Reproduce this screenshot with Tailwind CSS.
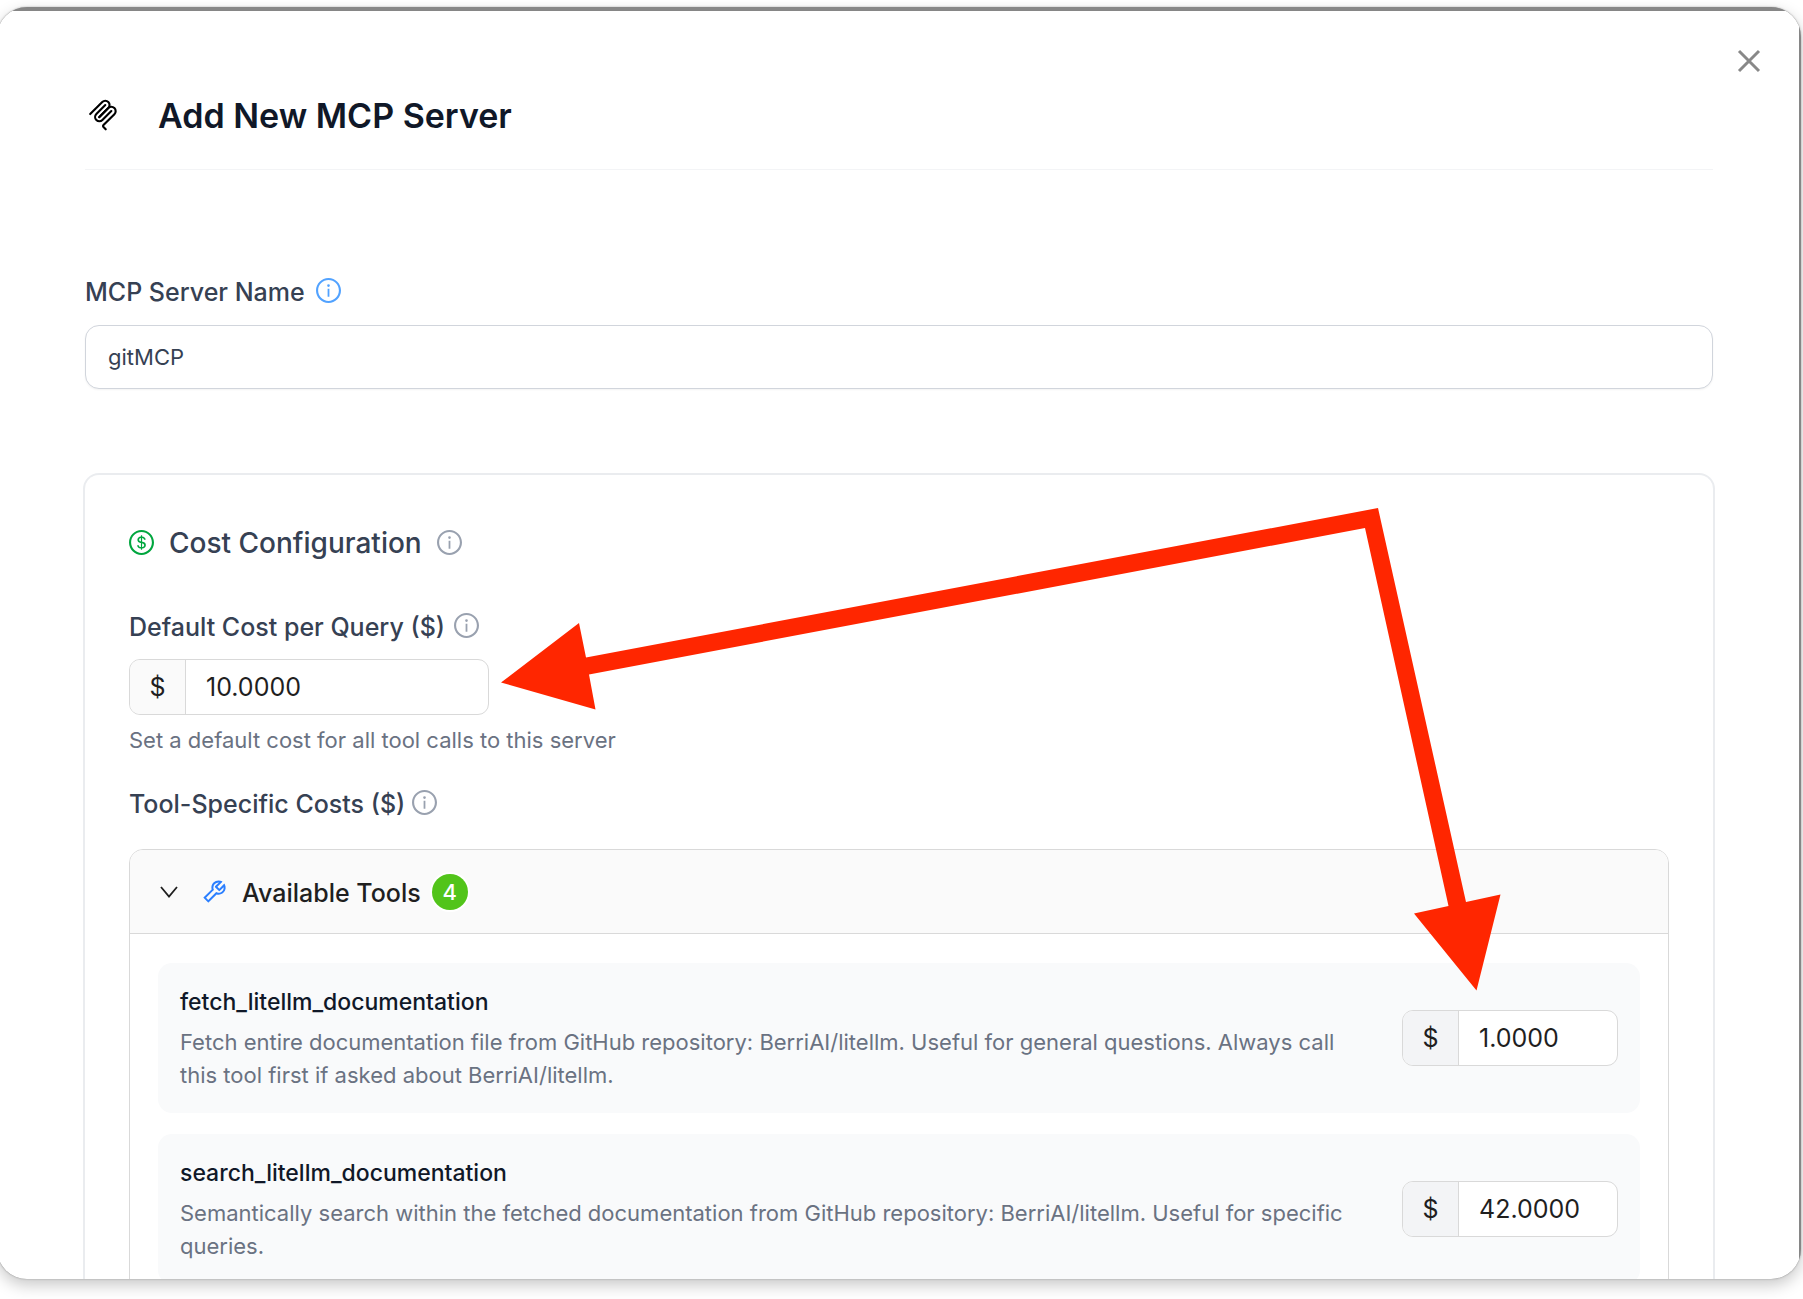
<!DOCTYPE html>
<html lang="en">
<head>
<meta charset="utf-8">
<title>Add New MCP Server</title>
<script src="https://cdn.jsdelivr.net/npm/@tailwindcss/browser@4"></script>
</head>
<body class="h-screen overflow-hidden bg-white font-['Inter',sans-serif] text-[#1f1f1f]">
<svg class="hidden" aria-hidden="true">
  <symbol id="info" viewBox="64 64 896 896">
    <path d="M512 64C264.6 64 64 264.6 64 512s200.6 448 448 448 448-200.6 448-448S759.4 64 512 64zm0 820c-205.4 0-372-166.6-372-372s166.6-372 372-372 372 166.6 372 372-166.6 372-372 372z"/>
    <path d="M464 336a48 48 0 1096 0 48 48 0 10-96 0zm72 112h-48c-4.4 0-8 3.6-8 8v272c0 4.4 3.6 8 8 8h48c4.4 0 8-3.6 8-8V456c0-4.4-3.6-8-8-8z"/>
  </symbol>
</svg>

<div class="relative h-full pt-[7px] pb-5">
  <div class="-ml-[3px] mr-0.5 h-full overflow-hidden rounded-[30px] bg-[#868686] px-0.5 pt-1 shadow-[0_0_2px_rgba(0,0,0,0.3),0_6px_16px_rgba(0,0,0,0.22)]">
    <main role="dialog" aria-labelledby="dialog-title" class="relative h-full overflow-hidden bg-white px-[86px] pt-[50px]">
      <button type="button" aria-label="Close" class="absolute top-[34px] right-[34px] flex size-8 items-center justify-center text-[#888888]">
        <svg class="size-6" viewBox="0 0 24 24" fill="none" stroke="currentColor" stroke-width="3"><path d="M2 2l20 20M22 2l-20 20"/></svg>
      </button>

      <header class="flex h-[109px] items-center gap-[39px] border-b border-gray-100">
        <svg class="ml-0.5 size-8" viewBox="0 0 180 180" fill="none" stroke="#000" stroke-width="12" stroke-linecap="round">
          <path d="M18 84.8528L85.8822 16.9706C95.2548 7.59798 110.451 7.59798 119.823 16.9706C129.196 26.3431 129.196 41.5391 119.823 50.9117L68.5581 102.177"/>
          <path d="M69.2652 101.47L119.823 50.9117C129.196 41.5391 144.392 41.5391 153.765 50.9117L154.118 51.2652C163.491 60.6378 163.491 75.8338 154.118 85.2063L92.7248 146.6C89.6006 149.724 89.6006 154.789 92.7248 157.913L105.331 170.52"/>
          <path d="M102.853 33.9411L52.6482 84.1457C43.2756 93.5183 43.2756 108.714 52.6482 118.087C62.0208 127.459 77.2167 127.459 86.5893 118.087L136.794 67.8822"/>
        </svg>
        <h1 id="dialog-title" class="text-[34px] font-semibold text-gray-900">Add New MCP Server</h1>
      </header>

      <div class="mt-[105px] flex h-[31px] items-center gap-[11px]">
        <label for="server-name" class="pt-0.5 text-[25px] leading-8 font-medium text-gray-700">MCP Server Name</label>
        <svg class="size-[25px] text-blue-400" fill="currentColor"><use href="#info"/></svg>
      </div>
      <input id="server-name" type="text" value="gitMCP" class="mt-[19px] block h-16 w-full rounded-[14px] border border-gray-300 bg-white px-[22px] text-[22px] text-gray-700 shadow-xs">

      <section class="mt-[86px] rounded-[14px] px-11 pt-12 pb-11 shadow-xs ring-2 ring-gray-200/80">
        <div class="flex h-[39px] items-center gap-[15px]">
          <svg class="size-[25px] text-green-600" viewBox="64 64 896 896" fill="currentColor"><path d="M512 64C264.6 64 64 264.6 64 512s200.6 448 448 448 448-200.6 448-448S759.4 64 512 64zm0 820c-205.4 0-372-166.6-372-372s166.6-372 372-372 372 166.6 372 372-166.6 372-372 372zm47.7-395.2l-25.4-5.9V348.6c38 5.2 61.5 29 65.5 58.2.5 4 3.9 6.9 7.9 6.9h44.9c4.7 0 8.4-4.1 8-8.8-6.1-62.3-57.4-102.3-125.9-109.2V263c0-4.4-3.6-8-8-8h-28.1c-4.4 0-8 3.6-8 8v33c-70.8 6.9-126.2 46-126.2 119 0 67.6 49.8 100.2 102.1 112.7l24.7 6.3v142.7c-44.2-5.9-69-29.5-74.1-61.3-.6-3.8-4-6.6-7.9-6.6H363c-4.7 0-8.4 4-8 8.7 4.5 55 46.2 105.6 135.2 112.1V761c0 4.4 3.6 8 8 8h28.4c4.4 0 8-3.6 8-8.1l-.2-31.7c78.3-6.9 134.3-48.8 134.3-124-.1-69.4-44.2-100.4-109-116.4zm-68.6-16.2c-5.6-1.6-10.3-3.1-15-5-33.8-12.2-49.5-31.9-49.5-57.3 0-36.3 27.5-57 64.5-61.7v124zM534.3 677V543.3c3.1.9 5.9 1.6 8.8 2.2 47.3 14.4 63.2 34.4 63.2 65.1 0 39.1-29.4 62.6-72 66.4z"/></svg>
          <h2 class="text-[28px] leading-10 font-medium text-gray-700">Cost Configuration</h2>
          <svg class="size-[25px] text-gray-400" fill="currentColor"><use href="#info"/></svg>
        </div>

        <div class="mt-12 flex h-[31px] items-center gap-[9px]">
          <label for="default-cost" class="pt-0.5 text-[25px] leading-8 font-medium text-gray-700">Default Cost per Query ($)</label>
          <svg class="size-[25px] text-gray-400" fill="currentColor"><use href="#info"/></svg>
        </div>
        <div class="mt-[18px] flex h-14 w-[360px] overflow-hidden rounded-[11px] border border-[#d9d9d9] bg-white text-[25px]">
          <span class="flex w-14 shrink-0 items-center justify-center border-r border-[#d9d9d9] bg-[#fafafa] pt-0.5">$</span>
          <input id="default-cost" type="text" value="10.0000" class="w-full min-w-0 px-5 pt-0.5">
        </div>
        <p class="mt-[9px] text-[22px] leading-8 text-gray-500">Set a default cost for all tool calls to this server</p>

        <div class="mt-[31px] flex h-[31px] items-center gap-[7px]">
          <h3 class="pt-0.5 text-[25px] leading-8 font-medium text-gray-700">Tool-Specific Costs ($)</h3>
          <svg class="size-[25px] text-gray-400" fill="currentColor"><use href="#info"/></svg>
        </div>

        <div class="mt-[31px] overflow-hidden rounded-[14px] border border-[#d9d9d9]">
          <button type="button" aria-expanded="true" class="flex h-[84px] w-full items-center border-b border-[#d9d9d9] bg-[#fafafa] pl-[30px]">
            <svg class="h-3 w-[18px]" viewBox="0 0 18 12" fill="none" stroke="currentColor" stroke-width="1.800"><path d="M1 1l8 9.500L17 1"/></svg>
            <svg class="ml-6 size-[25px] text-blue-500" viewBox="64 64 896 896" fill="currentColor"><path d="M876.6 239.5c-.5-.9-1.2-1.8-2-2.5-5-5-13.1-5-18.1 0L684.2 409.3l-67.9-67.9L788.7 169c.8-.8 1.4-1.6 2-2.5 3.6-6.1 1.6-13.9-4.5-17.5-98.2-58-226.8-44.7-311.3 39.7-67 67-89.2 162-66.5 247.4l-293 293c-3 3-2.8 7.9.3 11l169.7 169.7c3.1 3.1 8.1 3.3 11 .3l292.9-292.9c85.5 22.8 180.5.7 247.6-66.4 84.4-84.5 97.7-213.1 39.7-311.3zM786 499.8c-58.1 58.1-145.3 69.3-214.6 33.6l-8.8 8.8-.1-.1-274 274.1-79.2-79.2 230.1-230.1s0 .1.1.1l52.8-52.8c-35.7-69.3-24.5-156.5 33.6-214.6a184.2 184.2 0 01144-53.5L537 318.9a32.05 32.05 0 000 45.3l124.5 124.5a32.05 32.05 0 0045.3 0l132.8-132.8c3.7 51.8-14.4 104.8-53.6 143.9z"/></svg>
            <span class="ml-[15px] pt-0.5 text-[25px] leading-8 font-medium">Available Tools</span>
            <span class="ml-[11px] flex size-9 items-center justify-center rounded-full bg-[#52c41a] pt-0.5 text-[22px] font-medium text-white ring-2 ring-white">4</span>
          </button>

          <div class="flex flex-col gap-[21px] px-7 pt-[29px] pb-7">
            <div class="flex items-center gap-[53px] rounded-[14px] bg-gray-50 px-[22px] py-[21px]">
              <div class="min-w-0 flex-1 pt-0.5">
                <h4 class="text-[23px] leading-[33px] font-medium text-gray-900">fetch_litellm_documentation</h4>
                <p class="mt-[7px] text-[22px] leading-[33px] text-gray-500">Fetch entire documentation file from GitHub repository: BerriAI/litellm. Useful for general questions. Always call this tool first if asked about BerriAI/litellm.</p>
              </div>
              <div class="flex h-14 w-[216px] shrink-0 overflow-hidden rounded-[11px] border border-[#d9d9d9] bg-white text-[25px]">
                <span class="flex w-14 shrink-0 items-center justify-center border-r border-[#d9d9d9] bg-[#f3f4f6] pt-0.5">$</span>
                <input type="text" value="1.0000" aria-label="Cost of fetch_litellm_documentation" class="w-full min-w-0 px-5 pt-0.5">
              </div>
            </div>
            <div class="flex items-center gap-[53px] rounded-[14px] bg-gray-50 px-[22px] py-[21px]">
              <div class="min-w-0 flex-1 pt-0.5">
                <h4 class="text-[23px] leading-[33px] font-medium text-gray-900">search_litellm_documentation</h4>
                <p class="mt-[7px] text-[22px] leading-[33px] text-gray-500">Semantically search within the fetched documentation from GitHub repository: BerriAI/litellm. Useful for specific queries.</p>
              </div>
              <div class="flex h-14 w-[216px] shrink-0 overflow-hidden rounded-[11px] border border-[#d9d9d9] bg-white text-[25px]">
                <span class="flex w-14 shrink-0 items-center justify-center border-r border-[#d9d9d9] bg-[#f3f4f6] pt-0.5">$</span>
                <input type="text" value="42.0000" aria-label="Cost of search_litellm_documentation" class="w-full min-w-0 px-5 pt-0.5">
              </div>
            </div>
          </div>
        </div>
      </section>
    </main>
  </div>

  <!-- Arrows pointing at the default cost and the first tool's cost -->
  <svg class="pointer-events-none absolute top-[507px] left-[500px]" width="1002" height="485" viewBox="500 507 1002 485" fill="#ff2600" aria-hidden="true">
    <path d="M501 682.500L579 623L586 657.500L1378 508L1466 902L1500.500 894.500L1476.500 990.500L1414 913.500L1448.500 906L1365 528L589 674.500L595.500 709.500Z"/>
  </svg>
</div>
</body>
</html>
